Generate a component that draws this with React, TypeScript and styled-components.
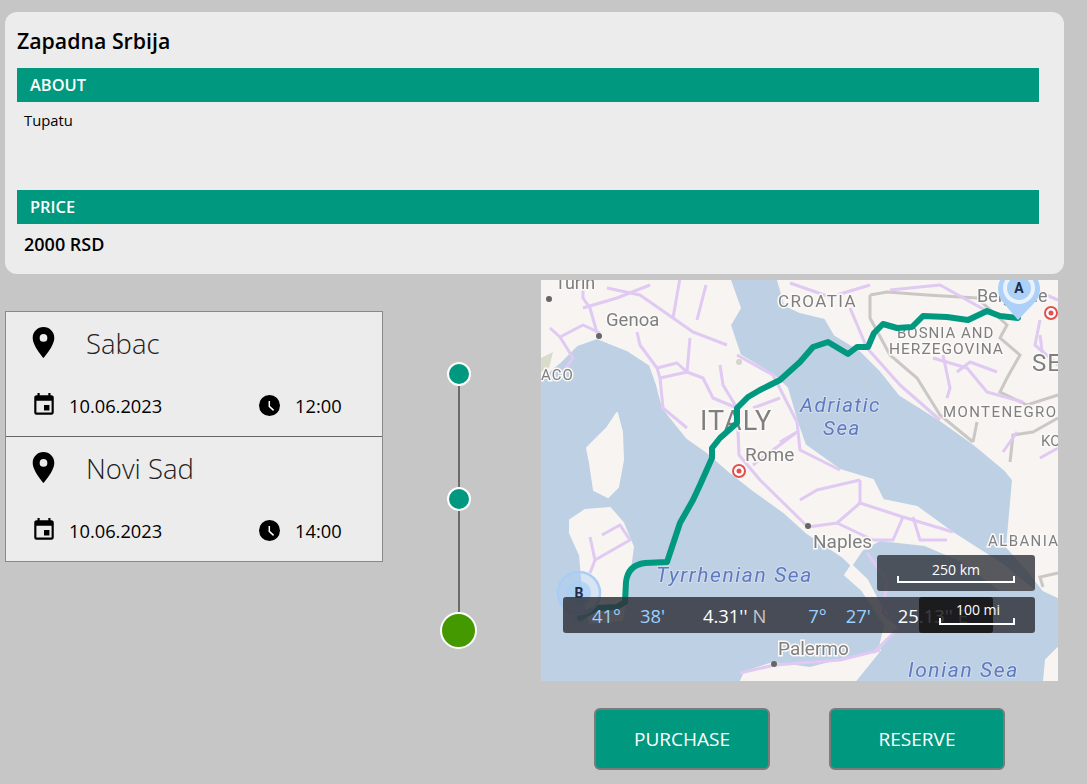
import React from 'react';
import styled, {createGlobalStyle} from 'styled-components';
import {MdEvent, MdLocationOn} from 'react-icons/md';

const GlobalStyle = createGlobalStyle`
    html, body {
        margin: 0;
        background: #c6c6c6;
        font-family: "Open Sans", "Noto Sans", "Liberation Sans", sans-serif;
    }
`;

const Page = styled.div`
    box-sizing: border-box;
    width: 1087px;
    height: 784px;
    padding: 12px 0 0 5px;
    overflow: hidden;
`;

const InfoCard = styled.section`
    box-sizing: border-box;
    width: 1059px;
    height: 262px;
    padding: 12px 25px 0 12px;
    background: #ececec;
    border-radius: 12px;
`;

const Title = styled.h1`
    margin: 0;
    height: 44px;
    font-size: 21.3px;
    line-height: 34px;
    font-weight: 600;
    color: #000;
`;

const SectionBar = styled.div`
    box-sizing: border-box;
    height: 34px;
    padding-left: 13px;
    background: #009980;
    color: #fff;
    font-size: 16.4px;
    font-weight: 600;
    line-height: 34px;
`;

const AboutText = styled.p`
    box-sizing: border-box;
    margin: 0;
    height: 88px;
    padding: 8px 0 0 7px;
    font-size: 14.8px;
    line-height: 20px;
    color: #000;
`;

const PriceText = styled.p`
    margin: 0;
    padding: 8px 0 0 7px;
    font-size: 18px;
    line-height: 24px;
    font-weight: 600;
    color: #000;
`;

const LowerRow = styled.div`
    display: flex;
    align-items: flex-start;
    margin-top: 6px;
`;

const StopList = styled.div`
    box-sizing: border-box;
    width: 378px;
    margin-top: 31px;
    border: 1px solid #8a8a8a;
    background: #ececec;
`;

const StopItem = styled.div`
    box-sizing: border-box;
    height: 124px;
    padding: 12px 0 0 19px;

    & + & {
        height: 125px;
        border-top: 1px solid #666;
    }
`;

const CityRow = styled.div`
    display: flex;
    align-items: center;
    gap: 24px;
    height: 37px;
    font-size: 27.5px;
    font-weight: 300;
    color: #222;
`;

const CityName = styled.span`
    padding-top: 2px;
`;

const WhenRow = styled.div`
    display: flex;
    align-items: center;
    height: 26px;
    margin-top: 31px;
    padding-left: 6px;
    font-size: 18.3px;
    color: #000;
`;

const WhenCell = styled.div<{$width: number; $gap: number}>`
    display: flex;
    align-items: center;
    gap: ${({$gap}) => $gap}px;
    width: ${({$width}) => $width}px;
`;

const Timeline = styled.div`
    display: flex;
    flex-direction: column;
    align-items: center;
    width: 37px;
    margin: 82px 0 0 57px;
`;

const Dot = styled.div<{$size: number; $color: string}>`
    box-sizing: border-box;
    width: ${({$size}) => $size}px;
    height: ${({$size}) => $size}px;
    border: 2px solid #fff;
    border-radius: 50%;
    background: ${({$color}) => $color};
`;

const TimelineLine = styled.div`
    width: 2px;
    height: 101px;
    background: #6b6b6b;
`;

const MapColumn = styled.div`
    width: 517px;
    margin-left: 64px;
`;

const MapFrame = styled.div`
    position: relative;
    width: 517px;
    height: 401px;
    overflow: hidden;
`;

const MapDrawing = styled.svg`
    display: block;
    width: 517px;
    height: 401px;
    background: #bdd0e4;
    font-family: Roboto, "Liberation Sans", sans-serif;
`;

const BlurLayer = styled.g`
    filter: blur(0.7px);
`;

const PlaceLabel = styled.text<{$size?: number; $spacing?: number}>`
    font-size: ${({$size}) => $size ?? 16}px;
    letter-spacing: ${({$spacing}) => $spacing ?? 0}px;
    fill: #7f7f7f;
    stroke: #fbf9f7;
    stroke-width: 3px;
    paint-order: stroke;
`;

const SeaLabel = styled.text<{$size?: number}>`
    font-size: ${({$size}) => $size ?? 20.5}px;
    font-style: italic;
    letter-spacing: 1.6px;
    fill: #5f7ac2;
    stroke: #d2deeb;
    stroke-width: 2px;
    paint-order: stroke;
`;

const CoordBar = styled.div`
    position: absolute;
    left: 22px;
    top: 317px;
    display: flex;
    align-items: center;
    box-sizing: border-box;
    width: 472px;
    height: 36px;
    padding-left: 29px;
    border-radius: 3px;
    background: rgba(48, 50, 58, 0.84);
    font-size: 18.4px;
    white-space: nowrap;
`;

const CoordPart = styled.span<{$tone: 'blue' | 'white' | 'grey'; $gap: number}>`
    margin-left: ${({$gap}) => $gap}px;
    color: ${({$tone}) => ($tone === 'blue' ? '#9bd0ff' : $tone === 'white' ? '#fff' : '#c6c6c6')};
`;

const ScaleBox = styled.div<{$left: number; $top: number; $width: number; $dark?: boolean}>`
    position: absolute;
    left: ${({$left}) => $left}px;
    top: ${({$top}) => $top}px;
    box-sizing: border-box;
    width: ${({$width}) => $width}px;
    height: 36px;
    border-radius: 3px;
    background: ${({$dark}) => ($dark ? 'rgba(18, 18, 20, 0.82)' : 'rgba(48, 50, 58, 0.8)')};
`;

const ScaleLabel = styled.div<{$left: number; $top: number; $width: number}>`
    position: absolute;
    left: ${({$left}) => $left}px;
    top: ${({$top}) => $top}px;
    width: ${({$width}) => $width}px;
    color: #fff;
    font-size: 14px;
    line-height: 18px;
    text-align: center;
`;

const ScaleRule = styled.div<{$left: number; $top: number; $width: number}>`
    position: absolute;
    left: ${({$left}) => $left}px;
    top: ${({$top}) => $top}px;
    box-sizing: border-box;
    width: ${({$width}) => $width}px;
    height: 7px;
    border: 2px solid #fff;
    border-top: 0;
`;

const ButtonRow = styled.div`
    display: flex;
    gap: 59px;
    margin-top: 27px;
    padding-left: 53px;
`;

const ActionButton = styled.button`
    box-sizing: border-box;
    width: 176px;
    height: 62px;
    border: 2px solid #7b7b7b;
    border-radius: 6px;
    background: #009980;
    color: #fff;
    font-family: inherit;
    font-size: 19px;
    cursor: pointer;
`;

const ClockIcon = () => (
    <svg width={25} height={25} viewBox="0 0 25 25">
        <circle cx={12.5} cy={12.5} r={10.5} fill="#000"/>
        <path d="M12.3 8v5.4l4.3 4" fill="none" stroke="#fff" strokeWidth={1.5}/>
    </svg>
);

const stops = [
    {city: 'Sabac', date: '10.06.2023', time: '12:00'},
    {city: 'Novi Sad', date: '10.06.2023', time: '14:00'},
];

const land = [
    'M541 280L541 378L560 362L577 345L597 338L627 350L650 365L657 385L663 408L687 438L707 452L730 472L753 490L785 513L807 533L843 557L867 580L880 605L897 627L880 647L885 625L862 590L845 575L862 550L880 540L925 545L960 560L1000 590L1033 590L1003 565L953 533L917 507L883 500L873 480L840 470L805 445L797 422L787 388L773 375L740 355L730 325L740 308L730 280Z',
    'M778 280L785 305L800 312L825 318L835 335L860 350L880 370L900 395L940 420L975 445L1005 470L1013 480L1007 547L1030 573L1043 590L1058 597L1058 280Z',
    'M570 520L585 510L610 508L623 523L633 547L627 590L622 620L590 623L583 590L580 555L570 533Z',
    'M617 413L622 432L623 460L618 487L608 497L594 490L590 463L587 448L607 428Z',
    'M741 681L745 672L773 663L810 668L880 650L855 681Z',
    'M1046 660L1058 648L1058 681L1044 681Z',
];

const roads = [
    'M550 328L560 337L583 325L600 333',
    'M560 337L573 358L563 372',
    'M583 285L583 298L590 308L597 333',
    'M607 288L640 295L673 318L693 332L727 345',
    'M583 308L617 298L650 285',
    'M637 332L640 345L657 368L660 378L663 408L687 428',
    'M657 368L677 363L687 372L690 338',
    'M660 378L687 372L703 378L713 398L737 408',
    'M720 365L723 385L737 408',
    'M737 355L773 375L797 422',
    'M753 408L780 398',
    'M780 442L797 432L753 465',
    'M673 318L680 278',
    'M706 285L697 320',
    'M737 408L739 455L760 480L808 527',
    'M800 500L817 490L860 480',
    'M860 480L860 503L837 523L808 527',
    'M860 503L903 517L953 532',
    'M913 517L920 540L947 540',
    'M903 517L893 540L873 540L837 523',
    'M867 553L887 580L883 613L900 627L873 653',
    'M797 422L800 450L840 470',
    'M590 537L595 560L630 540L620 525L602 535',
    'M590 573L595 560',
    'M740 673L775 665L840 660L880 650',
    'M790 283L830 297L870 285',
    'M850 308L867 348L900 385L940 420',
    'M890 290L940 285L985 310',
    'M943 355L950 388L947 398',
    'M933 358L967 368L987 392L1023 402',
    'M1040 335L1043 358',
    'M957 372L970 362L997 372',
    'M1017 432L1003 452',
    'M1040 458L1058 448',
    'M1040 320L1035 345L1058 365',
    'M1035 290L1058 300',
];

const borders = [
    'M870 295L887 292L927 295L977 298L1007 325L1000 338L1020 355L1007 378L1000 392L1027 405L1058 395',
    'M870 295L870 318L890 355L917 378L940 415L973 442',
    'M977 422L973 442',
    'M1010 462L1013 435L1033 432L1058 418',
    'M1058 573L1040 577L1043 587',
];

const route = 'M1018 318L1000 316L987 311L968 320L947 317L923 316L912 327L897 328L883 324L874 333L868 347L857 347L848 354L828 342L813 347L800 362L780 380L770 385L760 390L748 397L737 408L737 423L720 438L712 448L712 458L700 485L693 500L680 523L667 562L645 563Q628 565 626 582L625 602L617 607L597 608L580 618';

const App = () => {
    return (
        <Page>
            <GlobalStyle/>
            <InfoCard>
                <Title>Zapadna Srbija</Title>
                <SectionBar>ABOUT</SectionBar>
                <AboutText>Tupatu</AboutText>
                <SectionBar>PRICE</SectionBar>
                <PriceText>2000 RSD</PriceText>
            </InfoCard>
            <LowerRow>
                <StopList>
                    {stops.map((stop) => (
                        <StopItem key={stop.city}>
                            <CityRow>
                                <MdLocationOn size={37} color="#000"/>
                                <CityName>{stop.city}</CityName>
                            </CityRow>
                            <WhenRow>
                                <WhenCell $width={226} $gap={12}>
                                    <MdEvent size={26} color="#000"/>
                                    {stop.date}
                                </WhenCell>
                                <WhenCell $width={100} $gap={13}>
                                    <ClockIcon/>
                                    {stop.time}
                                </WhenCell>
                            </WhenRow>
                        </StopItem>
                    ))}
                </StopList>
                <Timeline>
                    <Dot $size={24} $color="#009980"/>
                    <TimelineLine/>
                    <Dot $size={24} $color="#009980"/>
                    <TimelineLine/>
                    <Dot $size={37} $color="#459900"/>
                </Timeline>
                <MapColumn>
                    <MapFrame>
                        <MapDrawing viewBox="541 280 517 401">
                            <BlurLayer>
                                <g fill="#f7f4f1" stroke="#f7f4f1" strokeWidth={2} strokeLinejoin="round">
                                    {land.map((d) => <path key={d} d={d}/>)}
                                </g>
                                <path d="M541 358L553 352L549 368L541 372Z" fill="#d9dccb"/>
                                <circle cx={739} cy={362} r={3} fill="#d5d5cd"/>
                                <g fill="none" stroke="#cbc7c4" strokeWidth={3}>
                                    {borders.map((d) => <path key={d} d={d}/>)}
                                </g>
                                <g fill="none" stroke="#e0c9f2" strokeWidth={3} strokeLinejoin="round">
                                    {roads.map((d) => <path key={d} d={d}/>)}
                                </g>
                                <circle cx={549} cy={299} r={3} fill="#666"/>
                                <circle cx={599} cy={336} r={3} fill="#666"/>
                                <circle cx={808} cy={526} r={3} fill="#666"/>
                                <circle cx={774} cy={664} r={3} fill="#666"/>
                                <circle cx={739} cy={471} r={6} fill="#fff" stroke="#e2504d" strokeWidth={2}/>
                                <circle cx={739} cy={471} r={2.5} fill="#e2504d"/>
                                <circle cx={1051} cy={313} r={6} fill="#fff" stroke="#e2504d" strokeWidth={2}/>
                                <circle cx={1051} cy={313} r={2.5} fill="#e2504d"/>
                                <PlaceLabel x={555} y={289} $size={18}>Turin</PlaceLabel>
                                <PlaceLabel x={606} y={326} $size={18.5}>Genoa</PlaceLabel>
                                <PlaceLabel x={541} y={380} $size={15} $spacing={1}>ACO</PlaceLabel>
                                <PlaceLabel x={778} y={307} $size={17} $spacing={1.4}>CROATIA</PlaceLabel>
                                <PlaceLabel x={700} y={430} $size={27} $spacing={1}>ITALY</PlaceLabel>
                                <PlaceLabel x={745} y={461} $size={19}>Rome</PlaceLabel>
                                <PlaceLabel x={977} y={302} $size={18}>Belgrade</PlaceLabel>
                                <PlaceLabel x={897} y={338} $size={15} $spacing={1}>BOSNIA AND</PlaceLabel>
                                <PlaceLabel x={889} y={354} $size={15.5} $spacing={1}>HERZEGOVINA</PlaceLabel>
                                <PlaceLabel x={1032} y={371} $size={24} $spacing={1}>SE</PlaceLabel>
                                <PlaceLabel x={943} y={417} $size={15} $spacing={1.4}>MONTENEGRO</PlaceLabel>
                                <PlaceLabel x={1041} y={446} $size={15}>KO</PlaceLabel>
                                <PlaceLabel x={988} y={546} $size={15} $spacing={1.4}>ALBANIA</PlaceLabel>
                                <PlaceLabel x={813} y={548} $size={19}>Naples</PlaceLabel>
                                <PlaceLabel x={778} y={655} $size={19}>Palermo</PlaceLabel>
                                <SeaLabel x={800} y={412}>Adriatic</SeaLabel>
                                <SeaLabel x={823} y={435}>Sea</SeaLabel>
                                <SeaLabel x={656} y={582} $size={21}>Tyrrhenian Sea</SeaLabel>
                                <SeaLabel x={908} y={677} $size={21}>Ionian Sea</SeaLabel>
                            </BlurLayer>
                            <path d={route} fill="none" stroke="#009980" strokeWidth={6} strokeLinejoin="round" strokeLinecap="round"/>
                            <path d="M1018 320L1001 300A21 21 0 1 1 1037 300Z" fill="#acd0f7"/>
                            <circle cx={1019} cy={288} r={16} fill="#eaf2fc"/>
                            <circle cx={1019} cy={288} r={12} fill="#acd0f7"/>
                            <text x={1019} y={293} fontSize={14} fontWeight={700} textAnchor="middle" fill="#1f2a44">A</text>
                            <path d="M580 626L563 606A21 21 0 1 1 597 606Z" fill="#a8cdf6" fillOpacity={0.4}/>
                            <circle cx={579} cy={593} r={21} fill="none" stroke="#a8cdf6" strokeWidth={2.5}/>
                            <circle cx={579} cy={593} r={12} fill="#a8cdf6" fillOpacity={0.7}/>
                            <text x={579} y={598} fontSize={14} fontWeight={700} textAnchor="middle" fill="#1f2a44">B</text>
                        </MapDrawing>
                        <CoordBar>
                            <CoordPart $tone="blue" $gap={0}>41°</CoordPart>
                            <CoordPart $tone="blue" $gap={19}>38'</CoordPart>
                            <CoordPart $tone="white" $gap={38}>4.31''</CoordPart>
                            <CoordPart $tone="grey" $gap={5}>N</CoordPart>
                            <CoordPart $tone="blue" $gap={42}>7°</CoordPart>
                            <CoordPart $tone="blue" $gap={19}>27'</CoordPart>
                            <CoordPart $tone="white" $gap={27}>25.13''</CoordPart>
                            <CoordPart $tone="grey" $gap={5}>E</CoordPart>
                        </CoordBar>
                        <ScaleBox $left={336} $top={275} $width={158}/>
                        <ScaleLabel $left={356} $top={281} $width={118}>250 km</ScaleLabel>
                        <ScaleRule $left={356} $top={296} $width={118}/>
                        <ScaleBox $left={378} $top={317} $width={74} $dark/>
                        <ScaleLabel $left={400} $top={321} $width={74}>100 mi</ScaleLabel>
                        <ScaleRule $left={398} $top={338} $width={76}/>
                    </MapFrame>
                    <ButtonRow>
                        <ActionButton>PURCHASE</ActionButton>
                        <ActionButton>RESERVE</ActionButton>
                    </ButtonRow>
                </MapColumn>
            </LowerRow>
        </Page>
    );
};

export default App;
